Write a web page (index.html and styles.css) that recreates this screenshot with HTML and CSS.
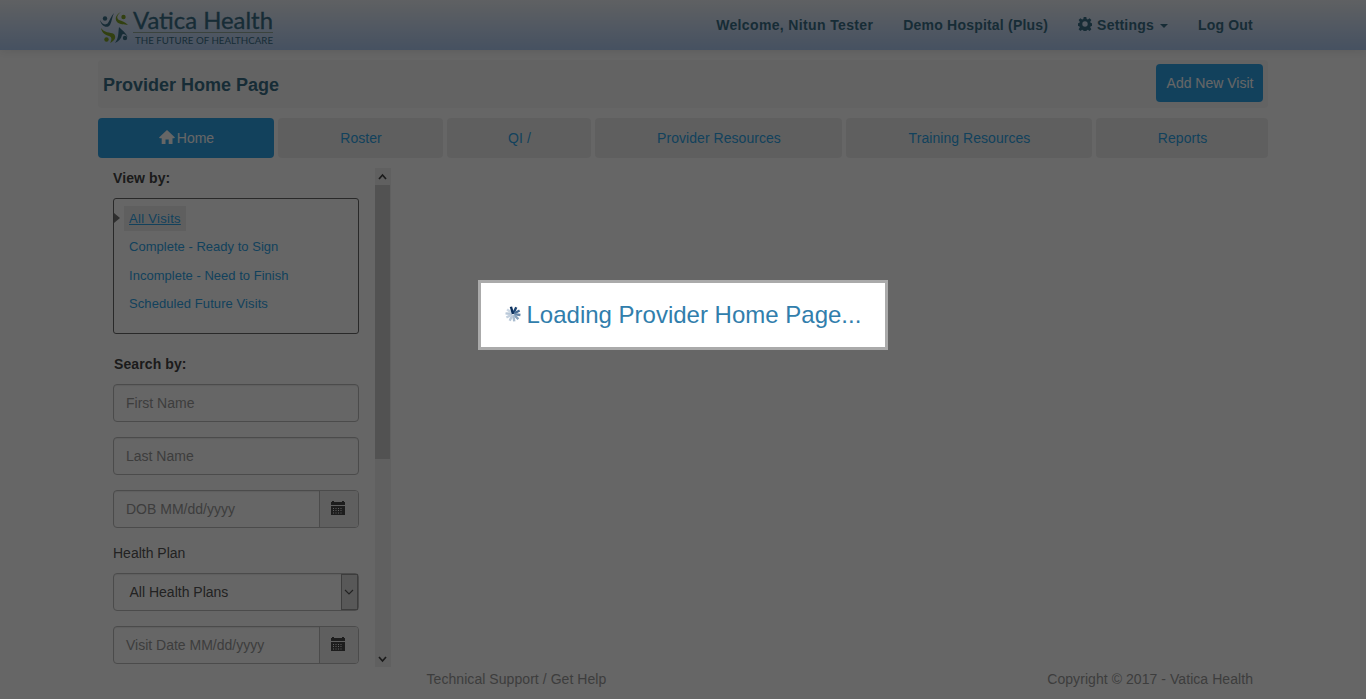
FILE: index.html
```html
<!DOCTYPE html>
<html lang="en">
<head>
<meta charset="utf-8">
<title>Provider Home Page</title>
<link rel="stylesheet" href="styles.css">
</head>
<body>
<svg class="defs" width="0" height="0">
  <symbol id="calendar" viewBox="0 0 14 14">
    <path d="M0 1h1V0h2v1h8V0h2v1h1v3H0z"/>
    <path fill-rule="evenodd" d="M0 5h14v9H0zM2 7v1h1V7zm2.500 0v1h1V7zM7 7v1h1V7zm2.500 0v1h1V7zM2 9v1h1V9zm2.500 0v1h1V9zM7 9v1h1V9zm2.500 0v1h1V9zM2 11.500v1h1v-1zm2.500 0v1h1v-1zm2.500 0v1h1v-1zm2.500 0v1h1v-1z"/>
  </symbol>
</svg>
<header class="navbar">
  <div class="container nav-inner">
    <a class="brand">
      <svg width="178" height="40" viewBox="0 0 178 40">
        <g fill="#3a6f88">
          <circle cx="7" cy="12.500" r="2.200"/>
          <path d="M2 14c2 4 5 6 8 3 2-3 3-7 6-10-2 4-2 8-4 12-3 4-9 1-10-5z"/>
          <circle cx="27" cy="32" r="2.200"/>
          <path d="M21 21c3 3 6 5 9 10-3-3-5-4-6-2-1 4-3 6-7 8 4-5 3-10 4-16z"/>
        </g>
        <g fill="#7da02a">
          <circle cx="25.500" cy="11" r="2.200"/>
          <path d="M23 6c-4 3-5 6-2 8 3 1 6 2 9 5-4-1-8 0-11-3-3-4 0-8 4-10z"/>
          <circle cx="8.500" cy="33.500" r="2.200"/>
          <path d="M3 22c3 5 9 4 13 6 3 4 0 7-4 9 2-3 2-6-1-7-4-1-7-3-8-8z"/>
        </g>
        <text class="logo-name" x="35" y="22.500" textLength="140" lengthAdjust="spacingAndGlyphs">Vatica Health</text>
        <path d="M35 26.500h140" stroke="#93a99a"/>
        <text class="logo-tag" x="37" y="38" textLength="138" lengthAdjust="spacingAndGlyphs">THE FUTURE OF HEALTHCARE</text>
      </svg>
    </a>
    <nav class="nav-links">
      <a class="welcome">Welcome, Nitun Tester</a>
      <a>Demo Hospital (Plus)</a>
      <a class="settings"><svg width="14" height="14" viewBox="-7 -7 14 14"><path fill-rule="evenodd" d="M-1.300-7h2.600l.4 2 1.200.5 1.700-1.200 1.800 1.800-1.200 1.700.5 1.200 2 .3v2.600l-2 .4-.5 1.200 1.200 1.700-1.800 1.800-1.700-1.200-1.200.5-.4 2h-2.600l-.4-2-1.200-.5-1.700 1.200-1.800-1.800 1.200-1.700-.5-1.200-2-.4v-2.600l2-.3.5-1.200-1.200-1.700 1.800-1.800 1.700 1.200 1.200-.5zM0-2.700a2.700 2.700 0 1 0 0 5.400 2.700 2.700 0 0 0 0-5.400z"/></svg><span>Settings</span><i class="caret"></i></a>
      <a>Log Out</a>
    </nav>
  </div>
</header>
<main class="container">
  <div class="title-bar">
    <h1>Provider Home Page</h1>
    <button class="add">Add New Visit</button>
  </div>
  <nav class="tabs">
    <a class="active"><svg width="16" height="15" viewBox="0 0 16 15"><path d="M8 0l8 7.500-1 .8h-1.500V14H9.700v-4.500H6.500V14H2.700V8.300H.8L0 7.500z"/></svg>Home</a>
    <a>Roster</a>
    <a>QI /</a>
    <a>Provider Resources</a>
    <a>Training Resources</a>
    <a>Reports</a>
  </nav>
  <div class="side-wrap">
    <aside class="side">
      <h2>View by:</h2>
      <ul class="views">
        <li class="current"><a>All Visits</a></li>
        <li><a>Complete - Ready to Sign</a></li>
        <li><a>Incomplete - Need to Finish</a></li>
        <li><a class="future">Scheduled Future Visits</a></li>
      </ul>
      <h2 class="search">Search by:</h2>
      <div class="field">First Name</div>
      <div class="field">Last Name</div>
      <div class="field"><span>DOB MM/dd/yyyy</span><b class="addon"><svg width="14" height="14"><use href="#calendar"/></svg></b></div>
      <label>Health Plan</label>
      <div class="field select"><span>All Health Plans</span><b class="arrow"><svg width="10" height="6" viewBox="0 0 10 6"><path d="M1 1l4 4 4-4"/></svg></b></div>
      <div class="field"><span>Visit Date MM/dd/yyyy</span><b class="addon"><svg width="14" height="14"><use href="#calendar"/></svg></b></div>
    </aside>
    <div class="scrollbar">
      <svg width="16" height="17" viewBox="0 0 16 17"><path d="M4 11l3.500-4L11 11"/></svg>
      <div class="thumb"></div>
      <svg width="16" height="17" viewBox="0 0 16 17"><path d="M4 7l3.500 4L11 7"/></svg>
    </div>
  </div>
  <footer><span>Technical Support / Get Help</span><span>Copyright © 2017 - Vatica Health</span></footer>
</main>
<div class="overlay">
  <div class="loading">
    <svg width="16" height="16" viewBox="-8 -8 16 16">
      <g stroke-width="2.400">
        <path d="M0-1V-7.500" stroke="#1f4775" transform="rotate(26)"/>
        <path d="M0-1V-7.500" stroke="#466b93" transform="rotate(62)"/>
        <path d="M0-1V-7.500" stroke="#6685a7" transform="rotate(98)"/>
        <path d="M0-1V-7.500" stroke="#88a2bc" transform="rotate(134)"/>
        <path d="M0-1V-7.500" stroke="#a9bccf" transform="rotate(170)"/>
        <path d="M0-1V-7.500" stroke="#bac9d9" transform="rotate(206)"/>
        <path d="M0-1V-7.500" stroke="#c3d0de" transform="rotate(242)"/>
        <path d="M0-1V-7.500" stroke="#b9c8d8" transform="rotate(275)"/>
        <path d="M0-1V-7.500" stroke="#cbd7e3" transform="rotate(308)"/>
        <path d="M0 0V-7.500" stroke="#0b2f5c" transform="rotate(344)"/>
      </g>
    </svg>
    <span>Loading Provider Home Page...</span>
  </div>
</div>
</body>
</html>
```
FILE: styles.css
```css
* { box-sizing: border-box; }
body { margin: 0; height: 699px; overflow: hidden; background: #fff; color: #444; font: 14px/20px "Liberation Sans", Arial, sans-serif; }
.defs { display: block; height: 0; }
.container { width: 1170px; margin: 0 auto; }
.navbar { height: 50px; background: linear-gradient(#eef2f7, #afcbf2); box-shadow: 0 1px 10px rgba(0, 0, 0, .1); }
.nav-inner { display: flex; justify-content: space-between; }
.brand { height: 50px; padding-top: 6px; }
.logo-name { font: 24px Lato, sans-serif; fill: #3a6f88; stroke: #3a6f88; stroke-width: .3px; }
.logo-tag { font: 10px Lato, sans-serif; fill: #3a6f88; }
.nav-links { display: flex; gap: 30px; padding: 15px 15px 0 0; color: #3a6f88; font-weight: bold; letter-spacing: .2px; }
.welcome { letter-spacing: .36px; }
.settings { display: flex; gap: 5px; }
.settings svg { margin-top: 2px; fill: #3a6f88; }
.caret { margin: 9px 0 0 1px; width: 8px; height: 4px; border: 4px solid transparent; border-top-color: #3a6f88; border-bottom: 0; }
.title-bar { display: flex; justify-content: space-between; height: 48px; margin-top: 10px; padding: 4px 5px; border-radius: 4px; background: #f7f7f7; }
h1 { margin: 0; font-size: 18px; line-height: 42px; color: #3a6f88; }
.add { width: 107px; height: 38px; padding: 0 0 0 1px; border: 0; border-radius: 4px; background: #2fa4e7; color: #fff; font: inherit; }
.tabs { display: grid; grid-template-columns: 176px 165px 144px 247px 246px 172px; gap: 4px; margin-top: 10px; }
.tabs a { display: flex; justify-content: center; gap: 2px; height: 40px; padding-left: 1px; line-height: 40px; border-radius: 4px; background: #eee; color: #2fa4e7; letter-spacing: .05px; }
.tabs .active { background: #2fa4e7; color: #fff; letter-spacing: 0; }
.tabs svg { margin-top: 12px; fill: #fff; }
.side-wrap { display: flex; width: 293px; height: 499px; margin-top: 10px; }
.side { width: 277px; padding: 0 16px 0 15px; overflow: hidden; }
h2 { margin: 0 0 10px; font-size: 14px; line-height: 20px; color: #444; letter-spacing: .1px; }
.search { padding-left: 1px; margin-top: 20px; }
.views { height: 136px; margin: 0; padding: 7px 0 0 10px; border: 1px solid #666; border-radius: 3px; list-style: none; font-size: 13px; }
.views li { position: relative; height: 28.400px; line-height: 25px; color: #2fa4e7; letter-spacing: .02px; }
.views a { display: inline-block; height: 25px; padding: 0 5px; }
.views .current a { background: #eee; text-decoration: underline; letter-spacing: .3px; }
.views .future { letter-spacing: .08px; }
.current::before { content: ""; position: absolute; left: -10px; top: 7px; border: 5px solid transparent; border-left: 6px solid #777; border-right: 0; }
.field { display: flex; justify-content: space-between; height: 38px; margin-bottom: 15px; padding-left: 12px; border: 1px solid #bbb; border-radius: 4px; line-height: 36px; color: #999; box-shadow: inset 0 1px 1px rgba(0, 0, 0, .08); }
.addon { width: 39px; border-left: 1px solid #bbb; border-radius: 0 3px 3px 0; background: #eee; }
.addon svg { display: block; margin: 10px 0 0 11px; fill: #4a4a4a; }
label { display: block; margin-bottom: 10px; color: #555; }
.select { padding-left: 15.500px; color: #555; }
.arrow { width: 17px; border: 1px solid #999; background: #ddd; display: flex; align-items: center; justify-content: center; }
.arrow svg { margin-right: 1px; }
.arrow path { fill: none; stroke: #555; stroke-width: 1.200; }
.scrollbar { width: 16px; background: #f0f0f0; display: flex; flex-direction: column; }
.scrollbar path { fill: none; stroke: #444; stroke-width: 1.700; }
.thumb { width: 15px; height: 274px; margin-bottom: auto; background: #cdcdcd; }
footer { display: flex; justify-content: space-between; padding: 2px 15px 0 328.500px; color: #999; letter-spacing: .06px; }
.overlay { position: fixed; inset: 0; display: flex; align-items: flex-start; justify-content: center; padding-top: 280px; background: rgba(0, 0, 0, .6); }
.loading { display: flex; width: 410px; height: 70px; padding-left: 23px; border: 3px solid #aaa; background: #fff; color: #317eac; font-size: 24px; line-height: 64px; }
.loading svg { margin: 23px 5.500px 0 1px; }
.loading span { white-space: nowrap; }
```
